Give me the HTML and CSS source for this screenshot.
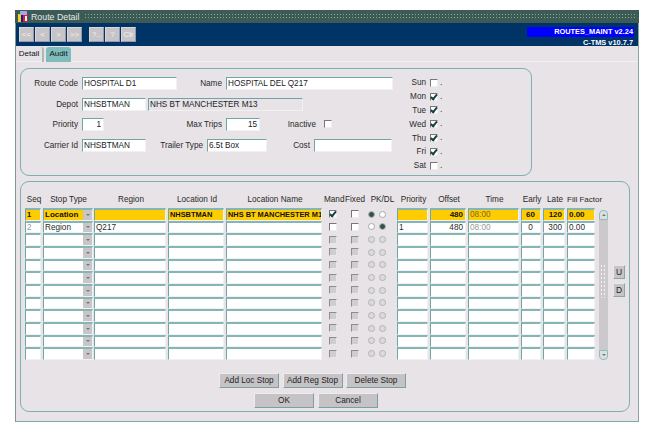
FILE: index.html
```html
<!DOCTYPE html>
<html>

<head>
    <title>Route Detail</title>
    <link rel="stylesheet" href="styles.css">
</head>

<body>
    <div class="window">
        <div class="titlebar">
            <svg class="app-icon" width="11" height="12" viewBox="0 0 11 12">
                <rect x="0" y="3" width="4" height="8" fill="#f4d020" />
                <rect x="4" y="3" width="6" height="8" fill="#d02040" />
                <rect x="2" y="0" width="7" height="4" fill="#a0a8e0" />
                <rect x="3" y="4" width="2" height="7" fill="#1818a0" />
                <rect x="7" y="5" width="2" height="5" fill="#ffffff" />
            </svg>
            <span class="title-text">Route Detail</span>
            <span class="title-dots"></span>
        </div>

        <div class="toolbar">
            <div class="tool-group">
                <button class="tool">&lt;&lt;</button>
                <button class="tool">&lt;</button>
                <button class="tool">&gt;</button>
                <button class="tool">&gt;&gt;</button>
            </div>
            <div class="tool-group">
                <button class="tool">?..</button>
                <button class="tool">?</button>
                <button class="tool">Clr</button>
            </div>
            <div class="version">
                <div class="version-line version-module">ROUTES_MAINT v2.24</div>
                <div class="version-line">C-TMS v10.7.7</div>
            </div>
        </div>

        <div class="tabs">
            <div class="tab tab-active">Detail</div>
            <div class="tab tab-audit">Audit</div>
        </div>

        <div class="content">
            <div class="panel panel-route">
                <div class="route-fields">
                    <div class="form-row">
                        <label class="lbl w57">Route Code</label><span class="field w95">HOSPITAL D1</span>
                        <label class="lbl w45">Name</label><span class="field w167">HOSPITAL DEL Q217</span>
                    </div>
                    <div class="form-row">
                        <label class="lbl w57">Depot</label><span class="field w64">NHSBTMAN</span>
                        <span class="field field-ro">NHS BT MANCHESTER M13</span>
                    </div>
                    <div class="form-row">
                        <label class="lbl w57">Priority</label><span class="field w22 num">1</span>
                        <label class="lbl w118">Max Trips</label><span class="field w34 num">15</span>
                        <label class="lbl w56">Inactive</label><span class="check check-inactive"></span>
                    </div>
                    <div class="form-row">
                        <label class="lbl w57">Carrier Id</label><span class="field w64">NHSBTMAN</span>
                        <label class="lbl w57">Trailer Type</label><span class="field w60">6.5t Box</span>
                        <label class="lbl w43">Cost</label><span class="field w78"></span>
                    </div>
                </div>
                <div class="days">
                    <div class="day"><label>Sun</label><span class="check"></span><span class="dot">.</span></div>
                    <div class="day"><label>Mon</label><span class="check on"></span><span class="dot">.</span></div>
                    <div class="day"><label>Tue</label><span class="check on"></span><span class="dot">.</span></div>
                    <div class="day"><label>Wed</label><span class="check on"></span><span class="dot">.</span></div>
                    <div class="day"><label>Thu</label><span class="check on"></span><span class="dot">.</span></div>
                    <div class="day"><label>Fri</label><span class="check on"></span><span class="dot">.</span></div>
                    <div class="day"><label>Sat</label><span class="check"></span><span class="dot">.</span></div>
                </div>
            </div>

            <div class="panel panel-stops">
                <div class="stops-area">
                    <div class="stops">
                        <div class="stop-head">
                            <span>Seq</span><span>Stop Type</span><span>Region</span><span>Location Id</span>
                            <span>Location Name</span><span>Mand</span><span>Fixed</span><span>PK/DL</span>
                            <span>Priority</span><span>Offset</span><span>Time</span><span>Early</span><span>Late</span>
                            <span class="fill-head">Fill Factor</span>
                        </div>

                        <div class="stop-row current">
                            <span class="cell">1</span><span class="cell combo">Location<i class="arrow"></i></span><span class="cell"></span>
                            <span class="cell">NHSBTMAN</span><span class="cell">NHS BT MANCHESTER M1</span>
                            <span class="tick"><span class="check on"></span></span><span class="tick"><span class="check"></span></span>
                            <span class="pair"><span class="radio on"></span><span class="radio"></span></span>
                            <span class="cell"></span><span class="cell num">480</span><span class="cell dim">08:00</span>
                            <span class="cell mid">60</span><span class="cell num">120</span><span class="cell figure">0.00</span>
                        </div>
                        <div class="stop-row">
                            <span class="cell dim">2</span><span class="cell combo">Region<i class="arrow"></i></span><span class="cell">Q217</span>
                            <span class="cell"></span><span class="cell"></span>
                            <span class="tick"><span class="check"></span></span><span class="tick"><span class="check"></span></span>
                            <span class="pair"><span class="radio"></span><span class="radio on"></span></span>
                            <span class="cell">1</span><span class="cell num">480</span><span class="cell dim">08:00</span>
                            <span class="cell mid">0</span><span class="cell num">300</span><span class="cell">0.00</span>
                        </div>
                        <div class="stop-row empty"><span class="cell"></span><span class="cell combo"><i class="arrow"></i></span><span class="cell"></span><span class="cell"></span><span class="cell"></span><span class="tick"><span class="check off"></span></span><span class="tick"><span class="check off"></span></span><span class="pair"><span class="radio off"></span><span class="radio off"></span></span><span class="cell"></span><span class="cell"></span><span class="cell"></span><span class="cell"></span><span class="cell"></span><span class="cell"></span></div>
                        <div class="stop-row empty"><span class="cell"></span><span class="cell combo"><i class="arrow"></i></span><span class="cell"></span><span class="cell"></span><span class="cell"></span><span class="tick"><span class="check off"></span></span><span class="tick"><span class="check off"></span></span><span class="pair"><span class="radio off"></span><span class="radio off"></span></span><span class="cell"></span><span class="cell"></span><span class="cell"></span><span class="cell"></span><span class="cell"></span><span class="cell"></span></div>
                        <div class="stop-row empty"><span class="cell"></span><span class="cell combo"><i class="arrow"></i></span><span class="cell"></span><span class="cell"></span><span class="cell"></span><span class="tick"><span class="check off"></span></span><span class="tick"><span class="check off"></span></span><span class="pair"><span class="radio off"></span><span class="radio off"></span></span><span class="cell"></span><span class="cell"></span><span class="cell"></span><span class="cell"></span><span class="cell"></span><span class="cell"></span></div>
                        <div class="stop-row empty"><span class="cell"></span><span class="cell combo"><i class="arrow"></i></span><span class="cell"></span><span class="cell"></span><span class="cell"></span><span class="tick"><span class="check off"></span></span><span class="tick"><span class="check off"></span></span><span class="pair"><span class="radio off"></span><span class="radio off"></span></span><span class="cell"></span><span class="cell"></span><span class="cell"></span><span class="cell"></span><span class="cell"></span><span class="cell"></span></div>
                        <div class="stop-row empty"><span class="cell"></span><span class="cell combo"><i class="arrow"></i></span><span class="cell"></span><span class="cell"></span><span class="cell"></span><span class="tick"><span class="check off"></span></span><span class="tick"><span class="check off"></span></span><span class="pair"><span class="radio off"></span><span class="radio off"></span></span><span class="cell"></span><span class="cell"></span><span class="cell"></span><span class="cell"></span><span class="cell"></span><span class="cell"></span></div>
                        <div class="stop-row empty"><span class="cell"></span><span class="cell combo"><i class="arrow"></i></span><span class="cell"></span><span class="cell"></span><span class="cell"></span><span class="tick"><span class="check off"></span></span><span class="tick"><span class="check off"></span></span><span class="pair"><span class="radio off"></span><span class="radio off"></span></span><span class="cell"></span><span class="cell"></span><span class="cell"></span><span class="cell"></span><span class="cell"></span><span class="cell"></span></div>
                        <div class="stop-row empty"><span class="cell"></span><span class="cell combo"><i class="arrow"></i></span><span class="cell"></span><span class="cell"></span><span class="cell"></span><span class="tick"><span class="check off"></span></span><span class="tick"><span class="check off"></span></span><span class="pair"><span class="radio off"></span><span class="radio off"></span></span><span class="cell"></span><span class="cell"></span><span class="cell"></span><span class="cell"></span><span class="cell"></span><span class="cell"></span></div>
                        <div class="stop-row empty"><span class="cell"></span><span class="cell combo"><i class="arrow"></i></span><span class="cell"></span><span class="cell"></span><span class="cell"></span><span class="tick"><span class="check off"></span></span><span class="tick"><span class="check off"></span></span><span class="pair"><span class="radio off"></span><span class="radio off"></span></span><span class="cell"></span><span class="cell"></span><span class="cell"></span><span class="cell"></span><span class="cell"></span><span class="cell"></span></div>
                        <div class="stop-row empty"><span class="cell"></span><span class="cell combo"><i class="arrow"></i></span><span class="cell"></span><span class="cell"></span><span class="cell"></span><span class="tick"><span class="check off"></span></span><span class="tick"><span class="check off"></span></span><span class="pair"><span class="radio off"></span><span class="radio off"></span></span><span class="cell"></span><span class="cell"></span><span class="cell"></span><span class="cell"></span><span class="cell"></span><span class="cell"></span></div>
                        <div class="stop-row empty"><span class="cell"></span><span class="cell combo"><i class="arrow"></i></span><span class="cell"></span><span class="cell"></span><span class="cell"></span><span class="tick"><span class="check off"></span></span><span class="tick"><span class="check off"></span></span><span class="pair"><span class="radio off"></span><span class="radio off"></span></span><span class="cell"></span><span class="cell"></span><span class="cell"></span><span class="cell"></span><span class="cell"></span><span class="cell"></span></div>
                    </div>

                    <div class="scrollbar">
                        <div class="scroll-btn scroll-up"><i class="arrow arrow-up"></i></div>
                        <div class="scroll-track"><span class="grip"></span></div>
                        <div class="scroll-btn scroll-down"><i class="arrow"></i></div>
                    </div>

                    <div class="move-btns">
                        <button class="btn-move">U</button>
                        <button class="btn-move">D</button>
                    </div>
                </div>

                <div class="actions">
                    <button class="btn">Add Loc Stop</button>
                    <button class="btn">Add Reg Stop</button>
                    <button class="btn">Delete Stop</button>
                </div>
                <div class="actions actions-main">
                    <button class="btn">OK</button>
                    <button class="btn">Cancel</button>
                </div>
            </div>
        </div>
    </div>
</body>

</html>
```
FILE: styles.css
```css
body {
    margin: 0;
    background: #fff;
    font-family: "Liberation Sans", Arial, sans-serif;
    font-size: 8.2px;
    color: #2a2a2a;
}

.window {
    box-sizing: border-box;
    width: 624px;
    height: 412px;
    margin: 10px 0 0 15px;
    background: #e7e3e7;
    border-left: 1px solid #7c9a98;
    border-right: 1px solid #8aa5a5;
    border-bottom: 1px solid #7fa5a5;
}

/* title bar */

.titlebar {
    display: flex;
    align-items: center;
    height: 13px;
    margin-left: -1px;
    margin-right: -1px;
    padding-left: 3px;
    background: #3c5b55;
    color: #e8e8e8;
    font-size: 8.8px;
}

.app-icon {
    margin-right: 2px;
}

.title-text {
    margin-right: 5px;
    white-space: nowrap;
}

.title-dots {
    flex: 1;
    height: 7px;
    margin-right: 2px;
    background-image: radial-gradient(circle, #8fa89f 0.7px, transparent 0.9px);
    background-size: 3px 3px;
}

/* toolbar */

.toolbar {
    display: flex;
    height: 23px;
    padding: 4px 4px 0 3px;
    box-sizing: border-box;
    background: #003366;
}

.tool-group {
    display: flex;
    gap: 1px;
    margin-right: 7px;
}

.tool {
    box-sizing: border-box;
    width: 15px;
    height: 15px;
    padding: 0;
    border: 1px solid #d8d8d8;
    border-right-color: #99a;
    border-bottom-color: #99a;
    background: #c6c4c6;
    color: #f2f2f2;
    font-family: inherit;
    font-size: 8px;
}

.version {
    margin-left: auto;
    width: 107px;
    color: #fff;
    font-size: 7.4px;
    font-weight: bold;
    text-align: right;
}

.version-line {
    height: 10px;
    line-height: 10px;
    padding-right: 1px;
}

.version-module {
    background: #0000ff;
    margin-bottom: 1px;
}

/* tabs */

.tabs {
    display: flex;
    gap: 2px;
    height: 16px;
    box-sizing: border-box;
    padding-top: 1px;
    border-bottom: 1px solid #f3f1f3;
}

.tab {
    box-sizing: border-box;
    height: 15px;
    line-height: 14px;
    text-align: center;
    font-size: 8px;
    color: #111;
    border-radius: 3px 3px 0 0;
}

.tab-active {
    width: 28px;
    border-right: 2px solid #b5b5b5;
}

.tab-audit {
    width: 25px;
    background: #7fbdbd;
}

/* panels */

.content {
    display: flex;
    flex-direction: column;
    gap: 5px;
    padding: 6px 0 0 4px;
}

.panel {
    box-sizing: border-box;
    border: 1px solid #7fafaf;
    border-radius: 9px;
}

.panel-route {
    display: flex;
    width: 512px;
    height: 108px;
    padding: 8px 0 0 0;
}

.panel-stops {
    width: 610px;
    height: 231px;
    padding: 11px 0 0 4px;
}

/* route fields */

.route-fields {
    display: flex;
    flex-direction: column;
    gap: 7.5px;
    width: 372px;
}

.form-row {
    display: flex;
    align-items: center;
    height: 13px;
}

.lbl {
    text-align: right;
    white-space: nowrap;
}

.field {
    box-sizing: border-box;
    height: 13px;
    line-height: 11px;
    margin-left: 4px;
    padding: 0 2px 0 1px;
    background: #fff;
    border-top: 1px solid #6fa5a5;
    border-left: 1px solid #6fa5a5;
    border-right: 1px solid #f2f0f2;
    border-bottom: 1px solid #f2f0f2;
    color: #222;
    white-space: nowrap;
    overflow: hidden;
}

.field-ro {
    width: 155px;
    margin-left: 2px;
    background: #e7e3e7;
}

.num {
    text-align: right;
}

.w22 { width: 22px; }
.w34 { width: 34px; }
.w43 { width: 43px; }
.w45 { width: 45px; }
.w56 { width: 56px; }
.w57 { width: 57px; }
.w60 { width: 60px; }
.w64 { width: 64px; }
.w78 { width: 78px; }
.w95 { width: 95px; }
.w118 { width: 118px; }
.w167 { width: 167px; }

/* checks and radios */

.check {
    position: relative;
    display: block;
    flex: none;
    box-sizing: border-box;
    width: 8px;
    height: 8px;
    background: #fff;
    border-top: 1px solid #777;
    border-left: 1px solid #777;
    border-right: 1px solid #eee;
    border-bottom: 1px solid #eee;
}

.check.on::after {
    content: "";
    position: absolute;
    left: 1px;
    top: -1px;
    width: 2px;
    height: 5px;
    border-right: 2px solid #173f3f;
    border-bottom: 2px solid #173f3f;
    transform: rotate(40deg);
}

.check.off {
    background: #cfcdcf;
    border-color: #8d8d8d #e8e8e8 #e8e8e8 #8d8d8d;
}

.check-inactive {
    margin: -2px 0 0 8px;
}

.radio {
    display: block;
    box-sizing: border-box;
    width: 7px;
    height: 7px;
    border-radius: 50%;
    background: #fff;
    border: 1px solid #aaa;
}

.radio.on {
    background: #31504e;
    border-color: #bbb;
}

.radio.off {
    background: #dcdadc;
    border-color: #b4b4b4;
}

/* days */

.days {
    display: flex;
    flex-direction: column;
    margin-top: -1px;
}

.day {
    display: flex;
    align-items: center;
    height: 13.8px;
}

.day label {
    width: 33px;
    text-align: right;
    margin-right: 4px;
}

.dot {
    margin-left: 2px;
    line-height: 8px;
}

/* stops grid */

.stops-area {
    display: flex;
}

.stops {
    width: 574px;
}

.stop-head,
.stop-row {
    display: grid;
    grid-template-columns: 18px 51px 74px 58px 98px 18px 26px 29px 33px 38px 53px 22px 24px 30px;
}

.stop-head {
    height: 15px;
    line-height: 14px;
    text-align: center;
    white-space: nowrap;
}

.fill-head {
    text-align: left;
    font-size: 8px;
}

.stop-row {
    height: 12.67px;
}

.cell {
    position: relative;
    box-sizing: border-box;
    margin-right: 2px;
    padding: 0 2px 0 1px;
    line-height: 10px;
    background: #fff;
    border-top: 2px solid #84b6b6;
    border-left: 1px solid #6fa5a5;
    border-right: 1px solid #f2f0f2;
    border-bottom: 1px solid #f2f0f2;
    overflow: hidden;
    white-space: nowrap;
}

.stop-row .num {
    text-align: right;
}

.mid {
    text-align: center;
}

.dim {
    color: #999;
}

.current .cell {
    background: #ffcc00;
    color: #111;
    font-size: 7.4px;
    font-weight: bold;
}

.current .num,
.current .mid,
.current .figure {
    font-size: 8px;
}

.current .combo {
    font-size: 8px;
}

.current .dim {
    color: #7a6a20;
    font-size: 8.2px;
    font-weight: normal;
}

.combo {
    margin-right: 1px;
}

.combo .arrow {
    position: absolute;
    top: 0;
    right: 0;
    bottom: 0;
    width: 9px;
    background: #c8c6c8;
}

.arrow::after {
    content: "";
    position: absolute;
    left: 50%;
    top: 50%;
    margin: -1px 0 0 -2px;
    border-left: 2px solid transparent;
    border-right: 2px solid transparent;
    border-top: 2px solid #777;
}

.tick {
    display: flex;
    align-items: center;
    justify-content: center;
}

.pair {
    display: flex;
    align-items: center;
    gap: 4px;
}

/* scrollbar */

.scrollbar {
    display: flex;
    flex-direction: column;
    width: 9px;
    height: 150px;
    margin: 17px 0 0 0;
}

.scroll-btn {
    position: relative;
    flex: none;
    box-sizing: border-box;
    height: 10px;
    background: #dcdfe0;
    border: 1px solid #8fbcbc;
}

.scroll-up {
    border-radius: 4px 4px 0 0;
}

.scroll-down {
    border-radius: 0 0 4px 4px;
}

.arrow {
    display: block;
}

.arrow-up::after {
    border-top: 0;
    border-bottom: 2px solid #777;
}

.scroll-track {
    display: flex;
    flex: 1;
    justify-content: center;
    background: #cbc9cb;
}

.grip {
    width: 7px;
    height: 34px;
    margin-top: 44px;
    background-image: radial-gradient(circle, #f4f4f4 0.8px, transparent 1px);
    background-size: 3px 4px;
}

.move-btns {
    display: flex;
    flex-direction: column;
    gap: 4px;
    margin: 72px 0 0 5px;
}

.btn-move {
    box-sizing: border-box;
    width: 12px;
    height: 14px;
    padding: 0;
    border: 1px solid #e8e8e8;
    border-right-color: #8fa5a5;
    border-bottom-color: #8fa5a5;
    background: #c6c4c6;
    color: #222;
    font-family: inherit;
    font-size: 8.5px;
}

/* action buttons */

.actions {
    display: flex;
    gap: 3.5px;
    margin: 13px 0 0 194px;
}

.actions-main {
    gap: 4px;
    margin: 5px 0 0 229px;
}

.btn {
    box-sizing: border-box;
    width: 60px;
    height: 15px;
    padding: 0;
    border: 1px solid #ececec;
    border-right-color: #7f9f9f;
    border-bottom-color: #7f9f9f;
    background: #c6c3c6;
    color: #222;
    font-family: inherit;
    font-size: 8.2px;
}
```
